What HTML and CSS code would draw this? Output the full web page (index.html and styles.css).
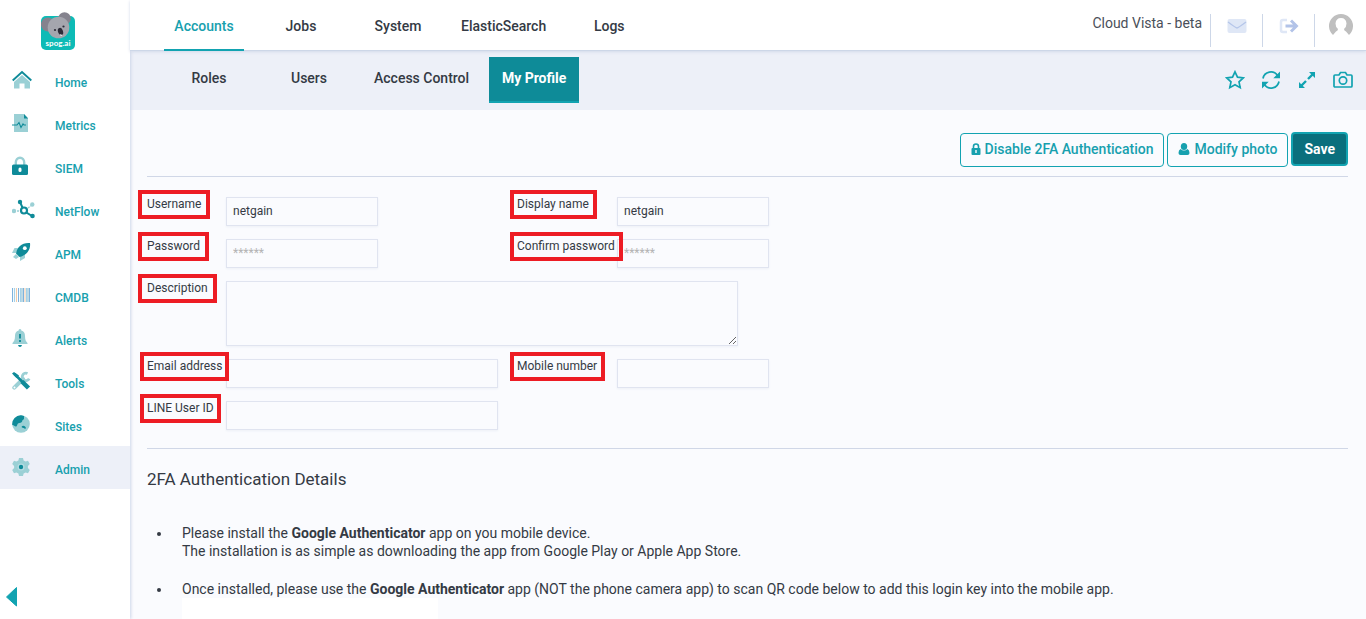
FILE: index.html
```html
<!DOCTYPE html>
<html lang="en">
<head>
<meta charset="utf-8">
<meta name="viewport" content="width=device-width, initial-scale=1">
<title>My Profile</title>
<link rel="stylesheet" href="styles.css">
</head>
<body>
<aside class="sidebar">
  <a class="logo" href="#" aria-label="spog.ai">
    <svg width="36" height="40" viewBox="0 0 36 40" aria-hidden="true">
      <rect x="1" y="5" width="34" height="34" rx="5" fill="#0dbbb6"/>
      <circle cx="24.500" cy="7.500" r="6.300" fill="#85838e"/>
      <circle cx="8" cy="13.500" r="7" fill="#85838e"/>
      <circle cx="18.500" cy="16.500" r="10.800" fill="#a5a6ae"/>
      <circle cx="15" cy="19" r="1.100" fill="#2d2c38"/>
      <circle cx="23.500" cy="15.500" r="1.100" fill="#2d2c38"/>
      <ellipse cx="20.500" cy="20.500" rx="2.500" ry="3.800" transform="rotate(-18 20.500 20.500)" fill="#2d2c38"/>
      <path d="M20 23.500q1 1.500 2 .500" stroke="#fff" fill="none"/>
      <text class="logo-text" x="18" y="35" text-anchor="middle">spog.ai</text>
    </svg>
  </a>
  <nav class="side-nav" aria-label="Main">
    <a class="side-link" href="#"><svg class="side-icon" viewBox="0 0 20 20"><path d="M10 5l8 7v6.500h-5.500v-5h-5v5H2V12z" fill="#9bd0d5"/><path d="M.7 10.500L10 2l9.300 8.500" fill="none" stroke="#0f8b99" stroke-width="1.900"/></svg>Home</a>
    <a class="side-link" href="#"><svg class="side-icon" viewBox="0 0 20 20"><path d="M2 1h10l4 4v14H2z" fill="#9bd0d5"/><path d="M12 1l4 4.500h-4z" fill="#0f8b99"/><path d="M0 12h5l2-2.500 2 5L11 11l1 1h2" fill="none" stroke="#0f8b99" stroke-width="1.100"/></svg>Metrics</a>
    <a class="side-link" href="#"><svg class="side-icon" viewBox="0 0 20 20"><path d="M3.800 9V6.500a4.200 4.800 0 018.400 0V9" fill="none" stroke="#9bd0d5" stroke-width="2.400"/><rect y="8.500" width="16" height="10.500" rx="1.500" fill="#0f8b99"/><rect x="6.500" y="11.500" width="3" height="4.500" rx="1.500" fill="#fff"/></svg>SIEM</a>
    <a class="side-link" href="#"><svg class="side-icon side-icon--wide" viewBox="0 0 23 20"><path d="M2 12h10l8-6" fill="none" stroke="#9bd0d5" stroke-width="1.300" stroke-dasharray="2 1"/><path d="M8 3l4 9 8 5" fill="none" stroke="#0f8b99" stroke-width="2"/><circle cx="2" cy="12" r="2.200" fill="#9bd0d5"/><circle cx="20.300" cy="5.500" r="2.200" fill="#9bd0d5"/><circle cx="8" cy="3" r="2.200" fill="#0f8b99"/><circle cx="20.500" cy="17" r="2.300" fill="#0f8b99"/><circle cx="12" cy="11.500" r="3" fill="#fff" stroke="#0f8b99" stroke-width="2.200"/></svg>NetFlow</a>
    <a class="side-link" href="#"><svg class="side-icon" viewBox="0 0 20 20"><path d="M6 6H2.500L0 11h4zM13 12v4l-5 3v-5z" fill="#9bd0d5"/><path d="M1 15l3-3 3 3-3 2z" fill="#9bd0d5"/><path d="M18 1c.8 6-2.500 11-8.500 13.500L7.500 15 4 11.500C5 5 10 .3 18 1z" fill="#0f8b99"/><circle cx="12.800" cy="6.200" r="1.900" fill="#fff"/></svg>APM</a>
    <a class="side-link" href="#"><svg class="side-icon" viewBox="0 0 20 20"><path d="M.5 3v14M6.500 3v14M11.500 3v14M17.500 3v14" stroke="#7fb2dc"/><path d="M2.500 3v14M8.500 3v14M14.500 3v14" stroke="#a5d2e8" stroke-width="1.200"/><path d="M4.500 3v14M13 3v14" stroke="#f0c9a8"/><path d="M10 3v14M16 3v14" stroke="#7fb5cc"/></svg>CMDB</a>
    <a class="side-link" href="#"><svg class="side-icon" viewBox="0 0 20 20"><path d="M8 1a1.300 1.300 0 011.300 1.500C12 3.500 13 5 13 8c0 4 1 5.500 2.500 7v1H.5v-1C2 13.500 3 12 3 8c0-3 1-4.500 3.700-5.500A1.300 1.300 0 018 1z" fill="#9bd0d5"/><path d="M8 6v4.500M8 12v2" stroke="#0f8b99" stroke-width="1.800"/><path d="M6 17h4q-.5 2-2 2t-2-2z" fill="#0f8b99"/></svg>Alerts</a>
    <a class="side-link" href="#"><svg class="side-icon" viewBox="0 0 20 20"><path d="M2.300 16.700L11 8" stroke="#9bd0d5" stroke-width="4" stroke-linecap="round"/><path d="M15.500 2.600a3.700 3.700 0 101.700 5" fill="none" stroke="#9bd0d5" stroke-width="2.800"/><circle cx="2.500" cy="16.500" r="1" fill="#fff"/><path d="M2.500 3L11 11.500" stroke="#0f8b99" stroke-width="2.600"/><path d="M0 2.500L2 1l5 3.500L4.500 7z" fill="#0f8b99"/><path d="M10 10.500l6.500 6.500" stroke="#0f8b99" stroke-width="4.500"/></svg>Tools</a>
    <a class="side-link" href="#"><svg class="side-icon" viewBox="0 0 20 20"><circle cx="9" cy="10" r="8.800" fill="#9bd0d5"/><path d="M9 1.200A8.800 8.800 0 00.300 11c2 0 2.500 2 4 1.500 1.500-1 .5-3 3-3.500 2 0 3-1 3-2.500L12 5V2z" fill="#0f8b99"/><path d="M9.500 13c1-2 3.500-1.500 4.500 1l-1 1c-1-1.500-2-.5-3.500-2z" fill="#0f8b99"/></svg>Sites</a>
    <a class="side-link side-link--active" href="#" aria-current="page"><svg class="side-icon" viewBox="0 0 20 20"><path d="M7 1h4l.6 2.600 2 1 2.400-.8 1.800 3.200-1.900 2v2l1.900 2-1.800 3.200-2.400-.8-2 1L11 19H7l-.6-2.600-2-1-2.400.8L.2 13l1.900-2V9L.2 7 2 3.800l2.400.8 2-1z" fill="#9bd0d5"/><circle cx="9" cy="10" r="3.500" fill="#b5dce2"/><circle cx="9" cy="10" r="2.200" fill="#0f8b99"/></svg>Admin</a>
  </nav>
  <button class="collapse" type="button" aria-label="Collapse menu"><svg width="12" height="20" viewBox="0 0 12 20"><path d="M10.500.5V19L.5 10z" fill="#12a3b1" stroke="#12a3b1" stroke-linejoin="round"/></svg></button>
</aside>

<main class="main">
  <header class="topbar">
    <nav class="tabs" aria-label="Administration">
      <a class="tab tab--active" href="#">Accounts</a>
      <a class="tab" href="#">Jobs</a>
      <a class="tab" href="#">System</a>
      <a class="tab" href="#">ElasticSearch</a>
      <a class="tab" href="#">Logs</a>
    </nav>
    <div class="account">
      <span class="account-name">Cloud Vista - beta</span>
      <button class="account-button" type="button" aria-label="Messages"><svg width="20" height="24" viewBox="0 0 20 24"><rect x=".5" y="5" width="19" height="14" rx="2" fill="#dfe7f6"/><path d="M1 8q8 6 9 6t9-6" fill="none" stroke="#b5c6e9" stroke-width="1.400"/></svg></button>
      <button class="account-button" type="button" aria-label="Sign out"><svg width="20" height="24" viewBox="0 0 20 24"><path d="M8 6H4Q2 6 2 8v8q0 2 2 2h4" fill="none" stroke="#dfe7f6" stroke-width="2.500"/><path d="M6.500 12H17M12 6.500l5.500 5.500-5.500 5.500" fill="none" stroke="#b2c3e8" stroke-width="2.900"/></svg></button>
      <button class="account-button" type="button" aria-label="Profile"><svg width="24" height="24" viewBox="0 0 24 24"><path d="M4 21A12 12 0 1120 21l-3-3.500q-2-1-2-2.500 2.500-2 2.500-5.500Q17 4 12 4T6.500 9.500Q6.500 13 9 15q0 1.500-2 2.500z" fill="#bfbfbf"/></svg></button>
    </div>
  </header>

  <div class="subbar">
    <nav class="subtabs" aria-label="Accounts">
      <a class="subtab" href="#">Roles</a>
      <a class="subtab" href="#">Users</a>
      <a class="subtab" href="#">Access Control</a>
      <a class="subtab subtab--active" href="#" aria-current="page">My Profile</a>
    </nav>
    <div class="tools">
      <button class="tool" type="button" aria-label="Favourite"><svg width="20" height="20" viewBox="0 0 20 20"><path d="M10 1.800l2.500 5.400 5.800.7-4.300 4 1.200 5.800L10 14.800l-5.200 2.900L6 11.900l-4.300-4 5.800-.7z"/></svg></button>
      <button class="tool" type="button" aria-label="Refresh"><svg width="20" height="20" viewBox="0 0 20 20"><path d="M2 8.500a8 8 0 0114.500-3M18 11.500a8 8 0 01-14.500 3"/><path class="solid" d="M19 1.500v6.700h-6.700zM1 18.500v-6.700h6.700z"/></svg></button>
      <button class="tool" type="button" aria-label="Full screen"><svg width="20" height="20" viewBox="0 0 20 20"><path d="M4 16l5-5M11 9l5-5" stroke-width="2.400"/><path class="solid" d="M18 2v6L12 2zM2 18v-6L8 18z"/></svg></button>
      <button class="tool" type="button" aria-label="Screenshot"><svg width="20" height="20" viewBox="0 0 20 20"><path d="M2 5h4l1.500-2.500h5L14 5h4q1 0 1 1v10q0 1-1 1H2q-1 0-1-1V6q0-1 1-1z"/><circle cx="10" cy="10.500" r="3.700"/></svg></button>
    </div>
  </div>

  <form class="content">
    <div class="actions">
      <button class="button" type="button"><svg width="10" height="12" viewBox="0 0 10 12"><path d="M2.500 6V3.500a2.500 2.500 0 015 0V6" fill="none" stroke="currentColor" stroke-width="1.600"/><path d="M1.500 5h7q1 0 1 1v5q0 1-1 1h-7q-1 0-1-1V6q0-1 1-1z" fill="currentColor"/><path d="M5 7v3" stroke="#fafbfe" stroke-width="1.400"/></svg>Disable 2FA Authentication</button>
      <button class="button" type="button"><svg width="12" height="12" viewBox="0 0 12 12"><ellipse cx="6" cy="3.500" rx="3.200" ry="3.500" fill="currentColor"/><path d="M2.500 6Q6 9 9.500 6 11.500 7 11.500 10q0 2-2 2h-7q-2 0-2-2 0-3 2-4z" fill="currentColor"/></svg>Modify photo</button>
      <button class="button button--primary" type="submit">Save</button>
    </div>

    <div class="fields">
      <label class="label" for="username"><span class="mark">Username</span></label>
      <input class="input" id="username" type="text" value="netgain">
      <label class="label label--second" for="display"><span class="mark mark--near">Display name</span></label>
      <input class="input" id="display" type="text" value="netgain">

      <label class="label" for="password"><span class="mark">Password</span></label>
      <input class="input" id="password" type="password" placeholder="******">
      <label class="label label--second" for="confirm"><span class="mark mark--near">Confirm password</span></label>
      <input class="input" id="confirm" type="password" placeholder="******">

      <label class="label" for="description"><span class="mark">Description</span></label>
      <textarea class="input input--area" id="description"></textarea>

      <label class="label" for="email"><span class="mark mark--tight">Email address</span></label>
      <input class="input input--wide" id="email" type="email">
      <label class="label label--second" for="mobile"><span class="mark mark--near">Mobile number</span></label>
      <input class="input" id="mobile" type="tel">

      <label class="label" for="line"><span class="mark mark--tight">LINE User ID</span></label>
      <input class="input input--wide" id="line" type="text">
    </div>

    <section class="details">
      <h2 class="details-title">2FA Authentication Details</h2>
      <ul class="steps">
        <li>Please install the <strong>Google Authenticator</strong> app on you mobile device.<br>The installation is as simple as downloading the app from Google Play or Apple App Store.</li>
        <li>Once installed, please use the <strong>Google Authenticator</strong> app (NOT the phone camera app) to scan QR code below to add this login key into the mobile app.
          <div class="qr"></div>
        </li>
      </ul>
    </section>
  </form>
</main>
</body>
</html>
```
FILE: styles.css
```css
* { box-sizing: border-box; }

body {
  display: flex;
  height: 100vh;
  margin: 0;
  overflow: hidden;
  background: #fafbfe;
  color: #343a44;
  font: 14px/18px Roboto, sans-serif;
}

a { color: inherit; text-decoration: none; }

button {
  padding: 0;
  border: 0;
  background: none;
  font: inherit;
  cursor: pointer;
}

svg { display: block; flex: none; }

.sidebar {
  z-index: 1;
  display: flex;
  flex: none;
  flex-direction: column;
  width: 130px;
  background: #fff;
  box-shadow: 1px 0 3px #ccd5e8;
}

.logo { padding: 11px 0 8px 40px; }
.logo-text { fill: #fff; font: 700 8px Lato, sans-serif; }

.side-link {
  display: flex;
  align-items: center;
  height: 43px;
  padding: 5px 0 0 12px;
  color: #17a0ae;
  font-size: 12px;
  font-weight: 500;
}

.side-link--active { background: #edf0f8; }

.side-icon {
  width: 20px;
  height: 20px;
  margin: 0 23px 6px 0;
}

.side-icon--wide { width: 23px; margin-right: 20px; }

.collapse { margin: auto auto 12px 6px; }

.main {
  display: flex;
  flex: 1;
  flex-direction: column;
  min-width: 0;
}

.topbar {
  z-index: 1;
  display: flex;
  flex: none;
  justify-content: space-between;
  height: 51px;
  padding-left: 34px;
  border-bottom: 1px solid #cdd7e8;
  background: #fff;
  box-shadow: 0 1px 3px #d3daea;
}

.tabs { display: flex; gap: 17px; }

.tab {
  min-width: 80px;
  height: 51px;
  padding: 17px 6px 0;
  font-weight: 500;
  text-align: center;
}

.tab--active { border-bottom: 2px solid #12a3b1; color: #17a0ae; }

.account { display: flex; padding-top: 14px; }
.account-name { margin-right: 8px; color: #4a4f59; }

.account-button {
  display: flex;
  justify-content: center;
  width: 52px;
  height: 33px;
  border-left: 1px solid #cdd7e8;
}

.subbar {
  display: flex;
  flex: none;
  align-items: center;
  justify-content: space-between;
  height: 59px;
  padding: 0 13px 2px 34px;
  background: #edf0f8;
}

.subtabs { display: flex; gap: 10px; }

.subtab {
  min-width: 90px;
  height: 46px;
  padding: 12px 10px 0;
  font-weight: 500;
  text-align: center;
}

.subtab--active {
  border-bottom: 2px solid #12a3b1;
  background: #0e8b98;
  color: #fff;
  font-weight: 700;
}

.tools { display: flex; gap: 16px; }

.tool svg { fill: none; stroke: #12a3b1; stroke-width: 1.7px; }
.tool .solid { fill: #12a3b1; stroke: none; }

.content {
  flex: 1;
  min-height: 0;
  padding: 22px 18px 0 17px;
  overflow: hidden;
}

.actions {
  display: flex;
  gap: 3px;
  padding-bottom: 9px;
  border-bottom: 1px solid #d0d7e7;
}

.actions .button:first-child { margin-left: auto; }

.button {
  display: flex;
  gap: 4px;
  align-items: center;
  height: 34px;
  margin-top: 1px;
  padding: 0 10px 2px;
  border: 1px solid #12a3b1;
  border-radius: 4px;
  color: #17a0ae;
  font-weight: 500;
}

.button--primary {
  margin: 0 0 1px;
  padding: 0 11px;
  border-width: 2px;
  background: #0a6f7d;
  color: #fff;
  font-weight: 700;
}

.fields {
  display: grid;
  grid-template-columns: 79px 291px 100px 1fr;
  row-gap: 13px;
  align-items: start;
  padding: 20px 0 18px;
  border-bottom: 1px solid #d0d7e7;
}

.label {
  grid-column: 1;
  font-size: 12px;
  line-height: 14px;
  white-space: nowrap;
}

.label--second { grid-column: 3; }

.mark { position: relative; }

.mark::after {
  position: absolute;
  inset: -7px -9px -8px -9px;
  border: 4px solid #ed1c24;
  content: "";
}

.mark--near::after { right: -8px; left: -7px; }
.mark--tight::after { right: -7px; left: -7px; }

.input {
  width: 152px;
  height: 29px;
  margin: 0;
  padding: 0 6px 2px;
  border: 1px solid #e0e4f0;
  outline: 0;
  background: #fafbfe;
  box-shadow: 0 1px 2px #edf0f7;
  color: #343a44;
  font: 12px/16px Roboto, sans-serif;
}

.input::placeholder { color: #b4b4b4; }
.input--wide { width: 272px; }
.input--area { grid-column: 2 / -1; width: 512px; height: 65px; }

.details-title {
  margin: 0 0 35px;
  padding-top: 20px;
  font-size: 17px;
  font-weight: 400;
  line-height: 20px;
}

.steps { margin: 0; padding-left: 25px; }
.steps li { margin-bottom: 20px; padding-left: 10px; }
.steps strong { font-weight: 700; }

.qr { width: 256px; height: 256px; background: #fff; }
```
